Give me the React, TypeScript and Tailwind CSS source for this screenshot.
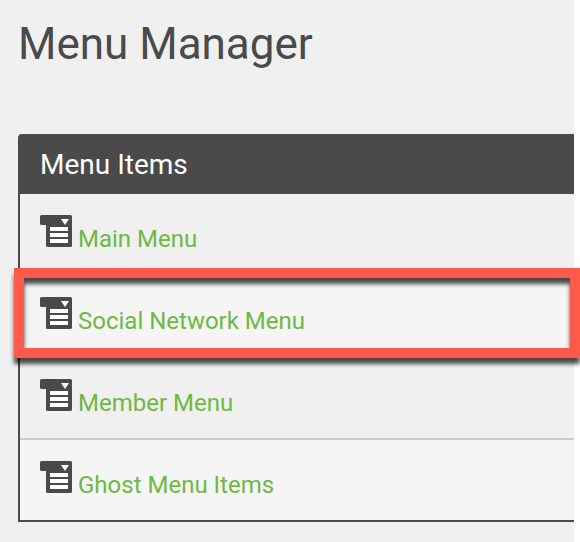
const menuItems = [
    { label: 'Main Menu', highlighted: false },
    { label: 'Social Network Menu', highlighted: true },
    { label: 'Member Menu', highlighted: false },
    { label: 'Ghost Menu Items', highlighted: false },
];

function MenuIcon() {
    return (
        <svg className="w-8 h-8 shrink-0" viewBox="0 0 32 32" aria-hidden="true">
            <path
                d="M1.5 0H30.5Q32 0 32 1.5V30.5Q32 32 30.5 32H7.5Q6 32 6 30.5V10H1.5Q0 10 0 8.5V1.5Q0 0 1.5 0Z"
                fill="#4a4a4a"
            />
            <path d="M21 4H29L25 10Z" fill="#fff" />
            <path d="M10 12H28V16H10ZM10 18H28V22H10ZM10 24H28V28H10Z" fill="#fff" />
        </svg>
    );
}

export default function App() {
    return (
        <div className="min-h-screen bg-white pr-1.5 font-['Roboto',sans-serif]">
            <main className="min-h-screen bg-[#f0f0f0] pl-[18px] pt-4">
                <h1 className="text-[44px] leading-[56px] text-[#4a4a4a] mb-[62px]">Menu Manager</h1>

                <section className="rounded-tl border-l-2 border-b-2 border-[#4a4a4a]">
                    <h2 className="h-[60px] flex items-center pl-5 pt-0.5 bg-[#4a4a4a] text-white text-[28px] leading-8 font-normal">
                        Menu Items
                    </h2>
                    <ul>
                        {menuItems.map((item) => (
                            <li
                                key={item.label}
                                className="relative border-b-2 border-[#cacaca] last:border-b-0 even:bg-[#f5f5f5]"
                            >
                                <a
                                    href="#"
                                    className="h-20 flex items-start gap-1.5 px-5 pt-[21px] text-2xl text-[#6fb843]"
                                >
                                    <MenuIcon />
                                    <span className="pt-2 leading-8">{item.label}</span>
                                </a>

                                {/* Callout frame around the highlighted row */}
                                {item.highlighted && (
                                    <div className="absolute -top-2 -bottom-0.5 -inset-x-1.5 border-10 border-[#ff594a] pointer-events-none drop-shadow-[0_6px_2px_rgba(0,0,0,0.7)]" />
                                )}
                            </li>
                        ))}
                    </ul>
                </section>
            </main>
        </div>
    );
}
